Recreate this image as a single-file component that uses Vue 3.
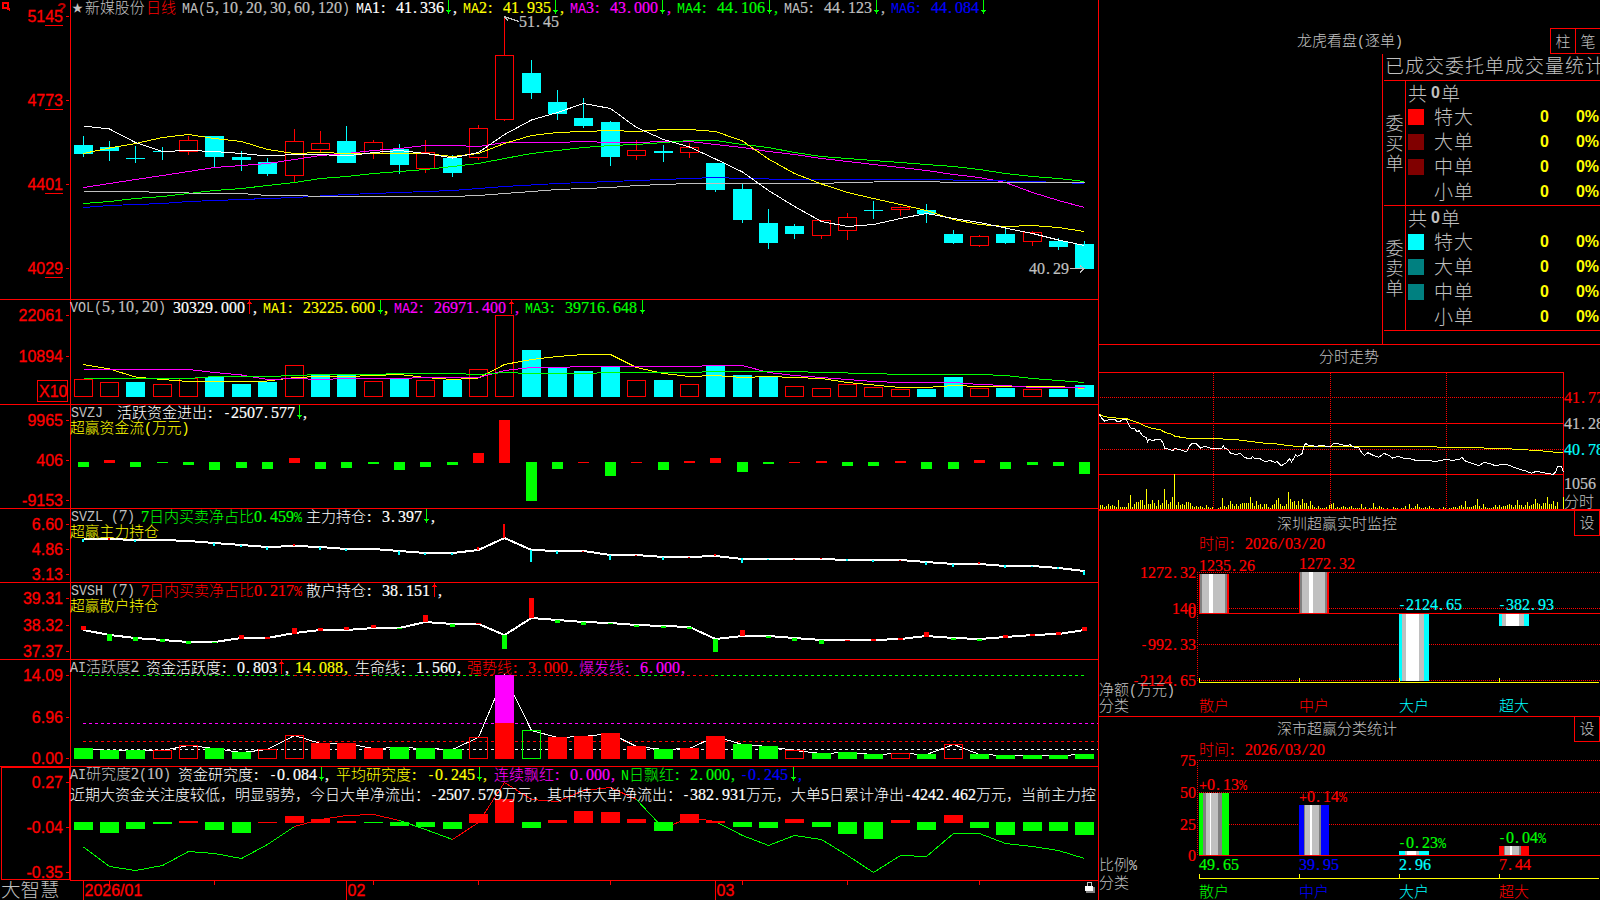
<template>
  <div class="terminal">
    <main class="charts">
      <svg
        v-for="p in panels"
        :key="p.id"
        class="panel"
        width="1099"
        :height="p.height"
        :viewBox="`0 ${p.top} 1099 ${p.height}`"
      >
        <template v-for="(s, i) in p.shapes" :key="i">
          <polyline v-if="s.points" class="line" :points="s.points" :stroke="s.color" :stroke-width="s.w || 1" :stroke-dasharray="s.dash" />
          <rect v-else-if="s.hollow" class="line" :x="s.x + 0.5" :y="s.y + 0.5" :width="s.w - 1" :height="Math.max(s.h - 1, 1)" :stroke="s.color" />
          <rect v-else class="fill" :x="s.x" :y="s.y" :width="s.w" :height="s.h" :fill="s.color" />
        </template>

        <rect class="fill" x="70" :y="p.top" width="1" :height="p.id === 'dates' ? 0 : p.height" :fill="RED" />
        <rect
          v-if="p.id !== 'dates'"
          class="fill"
          :x="p.id === 'research' ? 70 : 0"
          :y="p.top + p.height - 1"
          width="1099"
          height="1"
          :fill="RED"
        />
        <g v-for="t in p.ticks" :key="t[0]">
          <rect class="fill" x="66" :y="t[1]" width="3" height="1" :fill="RED" />
          <text class="axis" x="63" :y="t[1] + 6" text-anchor="end">{{ t[0] }}</text>
          <rect v-if="p.id === 'kline'" class="fill" x="45" :y="t[1] + 9" width="18" height="1" :fill="RED" />
        </g>

        <template v-if="p.id === 'kline'">
          <path class="line" d="M3 3h5v5h-5zM7 8l3 2" :stroke="RED" stroke-width="2" />
          <text class="help" x="57" y="13">?</text>
          <path class="line" d="M504 16.5L519 21.5M504 16.5l4 4" :stroke="GRAY" />
          <path class="line" d="M1070 268.5h14M1080 265.5l4 3l-4 4" :stroke="GRAY" />
        </template>
        <template v-if="p.id === 'vol'">
          <rect class="line" x="37.5" y="380.5" width="30" height="21" :stroke="RED" />
          <text class="axis" x="39" y="397">X10</text>
        </template>
        <rect v-if="p.id === 'research'" class="line" x="1.5" y="767.5" width="68" height="112" :stroke="RED" />
        <template v-if="p.id === 'dates'">
          <g v-for="m in months" :key="m[1]">
            <rect class="fill" :x="m[0]" y="881" width="1" height="19" :fill="RED" />
            <text class="axis" :x="m[0] + 1.5" y="896">{{ m[1] }}</text>
          </g>
          <rect v-for="x in weekTicks" :key="x" class="fill" :x="x" y="881" width="1" height="4" :fill="RED" />
          <path class="line" d="M1087.5 886v-3.500h4v3.500" :stroke="GRAY" />
          <rect class="fill" x="1086" y="887" width="9" height="6" fill="#808080" />
          <rect class="fill" x="1085" y="886" width="8" height="5" fill="#fff" />
        </template>

        <Txt v-for="(t, i) in p.texts" :key="'t' + i" :x="t[0]" :y="t[1]" :text="t[2]" :color="t[3]" :size="t[4]" />
        <Arrow v-for="(a, i) in p.arrows" :key="'a' + i" :x="a[0]" :y="a[1]" :up="a[2]" />
      </svg>
    </main>

    <aside class="side">
      <section class="orders">
        <header class="orders__bar">
          <svg class="orders__title" width="110" height="20"><Txt :x="0" :y="14" text="龙虎看盘(逐单)" :color="GRAY" /></svg>
          <div class="orders__tabs">
            <button type="button">柱</button>
            <button type="button">笔</button>
          </div>
        </header>
        <div class="orders__body">
          <div class="book">
            <h2 class="book__title">已成交委托单成交量统计</h2>
            <div v-for="g in book" :key="g.name" class="book__group">
              <div class="book__side"><span v-for="c in g.name" :key="c">{{ c }}</span></div>
              <div class="book__rows">
                <div class="book__total">共<b>0</b>单</div>
                <div v-for="r in g.rows" :key="r[0]" class="book__row">
                  <i class="book__swatch" :class="r[1]" />
                  <span class="book__name">{{ r[0] }}</span>
                  <b class="book__count">0</b>
                  <b class="book__pct">0%</b>
                </div>
              </div>
            </div>
          </div>
        </div>
      </section>

      <!-- intraday trend -->
      <svg class="panel" width="501" height="166" viewBox="1099 345 501 166">
        <rect class="fill" x="1099" y="372" width="465" height="1" :fill="RED" />
        <rect class="fill" x="1563" y="372" width="1" height="137" :fill="RED" />
        <rect class="fill" x="1099" y="423" width="465" height="1" :fill="RED" />
        <rect class="fill" x="1099" y="474" width="465" height="1" :fill="RED" />
        <path class="line dots" d="M1100 397.500H1563M1100 449.500H1563M1213.500 373V509M1330.500 373V509M1446.500 373V509" />
        <rect v-for="(v, i) in ticksVol" :key="i" class="fill" :x="minuteX(i)" :y="509 - v" width="1" :height="v" fill="#ff0" />
        <rect class="fill" x="1563" y="497" width="1" height="12" fill="#ff0" />
        <polyline class="line" :points="avgLine" stroke="#ff0" />
        <polyline class="line" :points="priceLine" stroke="#fff" />
        <rect class="fill" x="1099" y="509" width="501" height="2" :fill="RED" />
        <Txt v-for="(t, i) in trendTexts" :key="i" :x="t[0]" :y="t[1]" :text="t[2]" :color="t[3]" />
      </svg>

      <svg v-for="b in barCharts" :key="b.title" class="panel" width="501" :height="b.height" :viewBox="`1099 ${b.top} 501 ${b.height}`">
        <path class="line dots" :d="b.dots" />
        <rect class="fill" x="1199" :y="b.zero" width="401" height="1" :fill="RED" />
        <rect class="fill" x="1199" :y="b.base" width="400" height="1" fill="#ff0" />
        <g v-for="(bar, i) in b.bars" :key="i">
          <rect v-for="(s, k) in stripes(bar, 1199 + i * 100)" :key="k" class="fill" :x="s.x" :y="bar.y" :width="s.w" :height="bar.h" :fill="s.c" />
          <rect class="fill" :x="1199 + i * 100" :y="b.base - 4" width="1" height="4" fill="#ff0" />
          <Txt :x="bar.lx" :y="bar.ly" :text="bar.label" :color="bar.lc" />
          <Txt v-if="bar.value" :x="1199 + i * 100" :y="870" :text="bar.value" :color="bar.color" />
          <Txt :x="1199 + i * 100" :y="b.base + (b.zero === 613 ? 29 : 19)" :text="bar.name" :color="bar.color" />
        </g>
        <rect class="line" x="1574.5" :y="b.boxY + 0.5" width="25" height="25" :stroke="RED" />
        <rect v-if="b.zero === 613" class="fill" x="1099" y="716" width="501" height="1" :fill="RED" />
        <Txt v-for="(t, i) in b.texts" :key="'t' + i" :x="t[0]" :y="t[1]" :text="t[2]" :color="t[3]" />
      </svg>
    </aside>
  </div>
</template>

<script setup>
import { h } from 'vue'

const RED = '#f00'
const CYAN = '#0ff'
const GREEN = '#0f0'
const GRAY = '#c0c0c0'
const WHITE = '#fff'
const YELLOW = '#ff0'
const MAGENTA = '#f0f'
const BLUE = '#00f'

// fixed cells: 8px for latin, 15px for chinese
function Txt({ x, y, text, color, size }) {
  const cell = size || 15
  let left = x
  const runs = text.match(/[0-9.,:]+|[^0-9.,:\u0080-\uffff]+|[^\x20-\x7e]+/g) || []
  const nodes = runs.map((run) => {
    const code = run.charCodeAt(0)
    const start = left
    const step = code < 127 ? 8 : cell
    left += run.length * step
    if (/^[0-9.,:]/.test(run)) {
      const xs = [...run].map((c, i) => start + i * step + (/[.,:]/.test(c) ? 1 : 0)).join(' ')
      return h('text', { class: 'digits', x: xs, y, fill: color, stroke: color }, run)
    }
    return h(
      'text',
      {
        class: code < 127 ? 'latin' : 'han',
        x: start,
        y,
        fill: color,
        'font-size': code < 127 ? 15 : cell,
        textLength: run.length * step,
        lengthAdjust: 'spacingAndGlyphs',
      },
      run,
    )
  })
  return h('g', nodes)
}
Txt.props = ['x', 'y', 'text', 'color', 'size']

function Arrow({ x, y, up }) {
  const d = up
    ? `M${x + 0.5} ${y - 13}v14M${x - 2} ${y - 9.5}h5M${x - 1} ${y - 10.5}h3`
    : `M${x + 0.5} ${y - 13}v14M${x - 2} ${y - 2.5}h5M${x - 1} ${y - 1.5}h3`
  return h('path', { d, stroke: up ? RED : GREEN, 'shape-rendering': 'crispEdges', fill: 'none' })
}
Arrow.props = ['x', 'y', 'up']

const cx = (i) => Math.floor(83.15 + i * 26.36)

// pts: [index, y] pairs, or a plain list with one y per day
const line = (pts, color, w) => ({
  points: pts.map((p, i) => (Array.isArray(p) ? `${cx(p[0]) + 0.5},${p[1]}` : `${cx(i) + 0.5},${p}`)).join(' '),
  color,
  w,
})
const seg = (ys, from, to, color) => line(ys.slice(from, to + 1).map((y, i) => [from + i, y]), color)
const dashed = (x1, x2, y, color) => ({ points: `${x1},${y + 0.5} ${x2},${y + 0.5}`, color, dash: '3 3' })
const box = (i, y1, y2, color, half = 9, hollow = false) => ({
  x: cx(i) - half, y: y1, w: half * 2 + 1, h: y2 - y1, color, hollow,
})

// high, body top, body bottom, low, rising
const candles = [
  [136, 145, 154, 157], [141, 147, 151, 161], [146, 158, 159, 163], [147, 151, 152, 160], [136, 140, 152, 155, 1],
  [136, 136, 157, 167], [151, 157, 160, 171], [158, 162, 174, 176], [129, 141, 176, 182, 1], [131, 143, 150, 153, 1],
  [126, 141, 163, 163], [140, 142, 154, 159, 1], [144, 149, 165, 174], [140, 152, 169, 173, 1], [155, 158, 173, 177],
  [125, 128, 158, 160, 1], [17, 55, 120, 121, 1], [60, 73, 93, 99], [90, 102, 114, 120], [98, 118, 126, 128],
  [121, 122, 157, 166], [140, 150, 156, 160, 1], [145, 151, 153, 162], [143, 147, 153, 158, 1], [163, 163, 190, 192],
  [184, 189, 220, 223], [209, 223, 243, 249], [224, 226, 234, 239], [220, 220, 236, 239, 1], [213, 217, 231, 240, 1],
  [201, 210, 211, 219], [206, 207, 210, 216, 1], [204, 210, 214, 223], [230, 234, 243, 244], [235, 236, 246, 247, 1],
  [229, 234, 243, 244], [231, 232, 242, 246, 1], [238, 241, 247, 250], [241, 244, 269, 269],
]
const candleShapes = candles.flatMap(([hi, top, bottom, lo, up], i) => {
  const color = up ? RED : CYAN
  return [
    { x: cx(i), y: hi, w: 1, h: top - hi, color },
    { x: cx(i), y: bottom, w: 1, h: lo - bottom, color },
    box(i, top, bottom, color, 9, !!up),
  ]
})
const ma1 = [126, 129, 142.5, 151.5, 150.5, 151.5, 153.5, 156, 154.5, 154.5, 156, 152.5, 150.5, 153.5, 158, 152.5, 134.5, 120, 112.5, 103.5, 108.5, 127.5, 139.5, 147, 159, 172, 190.5, 206.5, 221.5, 226.5, 224.5, 218.5, 213.5, 218.5, 222.5, 228, 233.5, 240, 245.5]
const ma2 = [153.5, 148, 143.5, 137.5, 134.5, 138.5, 141.5, 149.5, 153.5, 152.5, 153.5, 153.5, 153.5, 153.5, 156.5, 153.5, 143.5, 135.5, 132.5, 131.5, 130.5, 131.5, 129.5, 129.5, 131.5, 141, 159, 173.5, 184, 192.5, 198.5, 204.5, 210.5, 219.5, 224.5, 226.5, 225.5, 227.5, 231.5]
const ma3 = [187.5, 183.5, 179.5, 175.5, 171.5, 167.5, 165.5, 163.5, 159.5, 155.5, 153.5, 150.5, 148.5, 145.5, 145.5, 146.5, 142.5, 142.5, 142.5, 141.5, 142.5, 142.5, 141.5, 141.5, 144.5, 147.5, 151.5, 154.5, 158.5, 161.5, 164.5, 167.5, 170.5, 174.5, 177.5, 182.5, 192.5, 200.5, 207.5]
const ma4 = [203.5, 201.5, 198.5, 196.5, 193.5, 190.5, 188.5, 185.5, 182.5, 178.5, 176.5, 173.5, 171.5, 169.5, 166.5, 163.5, 158.5, 153.5, 150.5, 147.5, 145.5, 144.5, 142.5, 140.5, 140.5, 144.5, 147.5, 152.5, 156.5, 158.5, 160.5, 162.5, 164.5, 166.5, 169.5, 173.5, 176.5, 178.5, 181.5]
const ma6 = [[0, 207.5], [1, 205.5], [3, 203.5], [4, 201.5], [6, 199.5], [8, 197.5], [10, 194.5], [12, 192.5], [14, 190.5], [16, 186.5], [18, 183.5], [20, 181.5], [22, 179.5], [24, 177.5], [25, 178.5], [27, 179.5], [32, 179.5], [34, 180.5], [36, 181.5], [38, 183.5]]
const ma5 = [[0, 191.5], [2, 191.5], [3, 192.5], [5, 193.5], [6, 193.5], [7, 195.5], [8, 195.5], [9, 196.5], [14, 196.5], [15, 195.5], [16, 193.5], [17, 191.5], [18, 189.5], [20, 187.5], [21, 185.5], [22, 184.5], [23, 183.5], [28, 183.5], [29, 182.5], [31, 181.5], [32, 181.5], [33, 182.5], [38, 182.5]]

// positive number is a hollow red bar top, negative a filled cyan one
const volumes = [379, 382, -382, 384, 378, -377, -384, -382, 365, -375, -375, 381, -379, 380, -380, 369, 315, -350, -368, -371, -367, 380, -380, 384, -366, -375, -377, 386, 388, 384, 387, 389, -389, -377, 388, -388, 389, -389, -385]
const volShapes = volumes.map((v, i) => box(i, Math.abs(v), 397, v > 0 ? RED : CYAN, 9, v > 0))
const vma1 = [364.5, 369, 377, 379.5, 381.5, 381.5, 381.5, 381, 377.5, 376.5, 376.5, 375.5, 374.5, 377.5, 379.5, 378, 364.5, 359.5, 356.5, 354.5, 354.5, 367.5, 373.5, 376.5, 375.5, 377.5, 376.5, 377.5, 378.5, 382.5, 385, 387.5, 387.5, 385.5, 386.5, 386.5, 386.5, 386.5, 388.5]
const vma2 = [[0, 369.5], [4, 369.5], [5, 372.5], [6, 375], [7, 379.5], [8, 378.5], [9, 379.5], [10, 378.5], [12, 378.5], [13, 377.5], [15, 377.5], [16, 370.5], [17, 367.5], [18, 367.5], [19, 366.5], [23, 366.5], [24, 365.5], [25, 365.5], [26, 372.5], [27, 375.5], [28, 377.5], [29, 379.5], [30, 381.5], [31, 382.5], [33, 382.5], [34, 384.5], [35, 385.5], [36, 387.5], [38, 387.5]]
const vma3 = [[0, 378.5], [4, 378.5], [5, 376.5], [7, 376.5], [8, 375.5], [9, 374.5], [11, 374.5], [12, 373.5], [14, 373.5], [15, 374.5], [16, 372.5], [17, 373.5], [19, 373.5], [20, 372.5], [23, 372.5], [24, 371.5], [27, 371.5], [28, 372.5], [30, 373.5], [31, 374.5], [34, 374.5], [35, 375.5], [36, 378.5], [37, 380.5], [38, 382.5]]

// bars around a zero row: above it red, below it green
const around = (ys, zero, half) =>
  ys.map((y, i) => (y <= zero && y > 0 ? box(i, y, zero + 1, RED, half) : box(i, zero, Math.abs(y), GREEN, half)))
const flow = [467, 460, 467, -463, 465, 470, 468, 469, 458, 469, 468, 464, 470, 467, 465, 453, 420, 501, 469, 462, 476, 462, 470, 461, 458, 472, 464, 462, 461, 466, 466, 461, 469, 469, 460, 469, 465, 466, 474]
const research = [830, 833, 829, 824, 821, 830, 833, 822, 816, 819, 821, 823, 826, 827, 829, 814, 799, 828, 820, 811, 812, 819, 831, 814, 821, 827, 828, 819, 827, 834, 839, 820, 830, 815, 828, 835, 831, 831, 835]
const researchLine = [847, 866.5, 870.5, 865.5, 851.5, 853.5, 858.5, 844.5, 826.5, 819.5, 815.5, 814.5, 820.5, 829.5, 839.5, 822.5, 782.5, 799.5, 801.5, 790.5, 787.5, 799.5, 828.5, 817.5, 821.5, 835.5, 845.5, 835.5, 839.5, 855.5, 872.5, 855.5, 856.5, 833.5, 833.5, 843.5, 846.5, 850.5, 858.5]

const mainHold = [539, 539, 540, 540, 541, 543, 545, 547, 546, 547, 549, 549, 551, 553, 553, 550, 538, 550, 551, 551, 555, 555, 557, 557, 556, 559, 559, 559, 559, 560, 560, 560, 562, 564, 564, 566, 566, 568, 571]
const mainSpikes = [
  [0, 539, 542], [1, 538, 540, 1], [2, 540, 542], [5, 543, 546], [6, 545, 547], [7, 547, 550], [8, 544, 546, 1], [9, 547, 550],
  [10, 549, 551], [12, 551, 555], [13, 553, 555], [14, 553, 555], [15, 547, 550, 1], [16, 524, 538, 1], [17, 550, 562],
  [18, 551, 554], [19, 551, 552, 1], [20, 555, 560], [21, 555, 556, 1], [22, 557, 560], [23, 557, 558, 1], [24, 554, 556, 1],
  [25, 558, 563], [26, 559, 560], [27, 559, 560, 1], [28, 558, 559, 1], [29, 559, 561], [30, 560, 562], [31, 560, 561, 1],
  [32, 562, 565], [33, 564, 567], [34, 562, 564, 1], [35, 565, 568], [36, 566, 567], [37, 567, 569], [38, 571, 575],
]
const retailHold = [630, 635, 638, 640, 642, 642, 638, 638, 633, 630, 630, 628, 628, 622, 624, 624, 635, 618, 620, 622, 623, 625, 626, 627, 639, 636, 636, 638, 640, 640, 640, 639, 636, 638, 639, 637, 635, 634, 630]
const retailBars = [
  [626, 630, 1], [634, 641], [637, 641], [639, 642], [641, 644], [642, 643], [635, 639, 1], [637, 639, 1], [628, 634, 1],
  [628, 631, 1], [627, 630, 1], [625, 628, 1], [628, 629], [615, 622, 1], [624, 627], [623, 624, 1], [635, 649], [598, 618, 1],
  [620, 623], [622, 625], [623, 624], [625, 627], [626, 628], [627, 629], [639, 652], [630, 636, 1], [636, 638], [638, 641],
  [640, 644], [640, 641, 1], [639, 641, 1], [638, 640, 1], [632, 637, 1], [638, 640], [639, 641], [635, 638, 1], [634, 636, 1],
  [632, 635, 1], [627, 631, 1],
]

// g filled green, r filled red, h hollow red, k hollow green
const active = '748g 750g 750g 750h 745h 748g 752g 749h 735h 743r 743r 748r 747g 748g 749g 737h 675m 730k 737r 736r 733r 746r 749g 748r 736r 744g 746g 750h 753g 752g 754g 753h 754g 744h 754g 755g 755g 755g 754g'
  .split(' ')
  .map((s) => [parseInt(s), s.slice(-1)])
const activeShapes = active.flatMap(([y, k], i) => {
  if (k === 'm') return [box(i, 675, 723, MAGENTA), box(i, 723, 759, RED)]
  return [box(i, y, 759, k === 'g' || k === 'k' ? GREEN : RED, 9, k === 'h' || k === 'k')]
})
const topDashes = [[83, 294, GREEN], [294, 373, RED], [373, 478, GREEN], [478, 636, RED], [636, 663, GREEN], [663, 715, RED], [715, 1084, GREEN]]

const panels = [
  {
    id: 'kline', top: 0, height: 300,
    ticks: [['5145', 16], ['4773', 100], ['4401', 184], ['4029', 268]],
    shapes: [...candleShapes, line(ma3, MAGENTA), line(ma4, GREEN), line(ma6, BLUE), line(ma5, GRAY), line(ma2, YELLOW), line(ma1, WHITE)],
    texts: [
      [72, 12, '★', GRAY, 11], [85, 13, '新媒股份', GRAY, 14.9], [146, 13, '日线', RED], [182, 13, 'MA(5,10,20,30,60,120)', GRAY],
      [356, 13, 'MA1: 41.336', WHITE], [452, 13, ',', WHITE], [463, 13, 'MA2: 41.935', YELLOW], [559, 13, ',', YELLOW],
      [570, 13, 'MA3: 43.000', MAGENTA], [666, 13, ',', MAGENTA], [677, 13, 'MA4: 44.106', GREEN], [773, 13, ',', GREEN],
      [784, 13, 'MA5: 44.123', GRAY], [880, 13, ',', GRAY], [891, 13, 'MA6: 44.084', BLUE],
      [519, 27, '51.45', GRAY], [1029, 274, '40.29', GRAY],
    ],
    arrows: [[448, 13], [555, 13], [662, 13], [769, 13], [876, 13], [983, 13]],
  },
  {
    id: 'vol', top: 300, height: 105,
    ticks: [['22061', 315], ['10894', 356]],
    shapes: [...volShapes, line(vma1, YELLOW), line(vma2, MAGENTA), line(vma3, GREEN)],
    texts: [
      [70, 312, 'VOL(5,10,20)', GRAY], [173, 313, '30329.000', WHITE], [252, 313, ',', WHITE], [263, 313, 'MA1: 23225.600', YELLOW],
      [383, 313, ',', YELLOW], [394, 313, 'MA2: 26971.400', MAGENTA], [514, 313, ',', MAGENTA], [525, 313, 'MA3: 39716.648', GREEN],
    ],
    arrows: [[249, 313, 1], [380, 313], [511, 313, 1], [642, 313]],
  },
  {
    id: 'flow', top: 405, height: 104,
    ticks: [['9965', 420], ['406', 460], ['-9153', 500]],
    shapes: around(flow, 462, 5),
    texts: [
      [71, 417, 'SVZJ', GRAY], [117, 418, '活跃资金进出: -2507.577', WHITE], [302, 418, ',', WHITE], [70, 433, '超赢资金流(万元)', YELLOW, 14.8],
    ],
    arrows: [[299, 418]],
  },
  {
    id: 'main', top: 509, height: 74,
    ticks: [['6.60', 524], ['4.86', 549], ['3.13', 574]],
    shapes: [line(mainHold, WHITE, 2), ...mainSpikes.map(([i, a, b, up]) => ({ x: cx(i) - 1, y: a, w: 2, h: b - a, color: up ? RED : CYAN }))],
    texts: [
      [71, 521, 'SVZL (7)', GRAY], [141, 522, '7日内买卖净占比0.459%', GREEN], [306, 522, '主力持仓: 3.397', WHITE], [430, 522, ',', WHITE],
      [70, 537, '超赢主力持仓', YELLOW, 14.8],
    ],
    arrows: [[426, 522]],
  },
  {
    id: 'retail', top: 583, height: 77,
    ticks: [['39.31', 598], ['38.32', 625], ['37.37', 651]],
    shapes: [line(retailHold, WHITE, 2), ...retailBars.map(([a, b, up], i) => box(i, a, b, up ? RED : GREEN, 2))],
    texts: [
      [71, 595, 'SVSH (7)', GRAY], [141, 596, '7日内买卖净占比0.217%', RED], [306, 596, '散户持仓: 38.151', WHITE], [437, 596, ',', WHITE],
      [70, 611, '超赢散户持仓', YELLOW, 14.8],
    ],
    arrows: [[434, 596, 1]],
  },
  {
    id: 'active', top: 660, height: 107,
    ticks: [['14.09', 675], ['6.96', 717], ['0.00', 758]],
    shapes: [
      ...topDashes.map(([a, b, c]) => dashed(a, b, 675, c)),
      dashed(83, 1098, 723, MAGENTA), dashed(83, 1098, 741, RED), dashed(83, 1098, 749, WHITE),
      line(active.map((a) => a[0] + 0.5), WHITE), ...activeShapes,
    ],
    texts: [
      [70, 672, 'AI活跃度2', GRAY], [146, 673, '资金活跃度: 0.803', WHITE], [284, 673, ',', WHITE], [295, 673, '14.088,', YELLOW],
      [355, 673, '生命线: 1.560,', WHITE], [467, 673, '强势线: 3.000,', RED], [579, 673, '爆发线: 6.000,', MAGENTA],
    ],
    arrows: [[281, 673, 1]],
  },
  {
    id: 'research', top: 767, height: 114,
    ticks: [['0.27', 782], ['-0.04', 827], ['-0.35', 872]],
    shapes: [
      seg(researchLine, 0, 8, GREEN), seg(researchLine, 8, 12, RED), seg(researchLine, 12, 14, GREEN), seg(researchLine, 14, 21, RED),
      seg(researchLine, 21, 22, GREEN), seg(researchLine, 22, 24, RED), seg(researchLine, 24, 38, GREEN),
      ...around(research, 822, 9),
    ],
    texts: [
      [70, 779, 'AI研究度2(10)', GRAY], [178, 780, '资金研究度: -0.084', WHITE], [324, 780, ',', WHITE], [336, 780, '平均研究度: -0.245', YELLOW],
      [482, 780, ',', YELLOW], [494, 780, '连续飘红: 0.000,', MAGENTA], [621, 780, 'N日飘红: 2.000,', GREEN], [740, 780, '-0.245', BLUE], [797, 780, ',', BLUE],
      [70, 800, '近期大资金关注度较低，明显弱势，今日大单净流出：-2507.579万元，其中特大单净流出：-382.931万元，大单5日累计净出-4242.462万元，当前主力控', WHITE],
    ],
    arrows: [[321, 780], [479, 780], [793, 780]],
  },
  { id: 'dates', top: 881, height: 19, ticks: [], shapes: [], texts: [[1, 897, '大智慧', GRAY, 19.5]], arrows: [] },
]
const months = [[83, '2026/01'], [346, '02'], [715, '03']]
const weekTicks = [109, 214, 373, 478, 610, 742, 847, 979]

const book = [
  { name: '委买单', rows: [['特大', 'red'], ['大单', 'maroon'], ['中单', 'maroon'], ['小单', 'none']] },
  { name: '委卖单', rows: [['特大', 'cyan'], ['大单', 'teal'], ['中单', 'teal'], ['小单', 'none']] },
]

// intraday lines, in thirds of a pixel from 1090,340
const third = (s) =>
  s.split(' ').map((p) => p.split(',').map(Number)).map(([x, y]) => `${1090 + x / 3},${340 + y / 3}`).join(' ')
const avgLine = third('28,223 40,229 55,232 78,234 110,236 125,242 145,248 160,256 185,265 210,269 225,277 245,283 255,289 275,292 295,295 365,296 430,298 470,303 520,309 560,312 590,316 620,319 985,320 1145,323 1250,326 1315,330 1360,333 1400,337 1420,338')
const priceLine = third('28,223 36,236 44,243 58,239 74,238 80,243 92,243 100,238 110,240 117,256 123,264 134,266 141,275 148,272 156,286 168,292 173,306 178,297 188,303 197,298 212,299 219,308 224,325 240,328 248,333 254,325 278,331 290,336 298,319 307,310 318,311 332,324 345,319 360,324 380,327 395,325 400,317 404,325 410,325 422,340 440,344 450,340 465,353 482,357 488,349 493,355 508,355 526,366 540,361 556,368 561,364 574,377 588,369 598,356 605,366 617,344 622,349 636,341 642,317 648,311 658,318 670,317 677,320 690,316 705,318 720,320 730,312 742,310 752,314 770,317 780,314 795,323 806,323 815,338 824,346 834,338 845,344 866,352 882,340 898,347 908,354 925,349 940,354 970,358 978,363 1000,361 1040,364 1068,358 1085,361 1108,359 1116,352 1124,362 1145,370 1168,377 1182,367 1200,371 1218,378 1235,373 1255,375 1280,385 1290,388 1310,394 1325,400 1338,394 1365,399 1390,403 1397,395 1402,380 1414,380 1420,395')
const ticksVol = [
  4, 4, 2, 3, 5, 3, 4, 3, 2, 9, 2, 2, 2, 2, 6, 14, 2, 5, 7, 7, 9, 9, 4, 20, 5, 5, 9, 6, 3, 9, 4, 6, 20, 9, 5, 7, 12, 35, 4, 7, 4, 5, 4, 7, 7, 6, 3, 2, 3, 2, 3,
  2, 1, 4, 2, 1, 2, 0, 0, 1, 2, 11, 3, 2, 4, 8, 5, 3, 5, 3, 5, 6, 6, 6, 6, 12, 6, 3, 8, 4, 5, 2, 5, 5, 2, 1, 4, 5, 9, 11, 5, 3, 3, 5, 17, 10, 7, 8, 4, 8, 4,
  10, 6, 6, 3, 8, 4, 2, 1, 3, 1, 1, 1, 2, 4, 5, 6, 1, 2, 1, 2, 3, 2, 1, 2, 3, 1, 1, 1, 1, 5, 1, 2, 0, 1, 1, 6, 2, 1, 3, 2, 1, 0, 1, 0, 0, 2, 1, 1, 0, 1,
  1, 3, 0, 5, 1, 1, 3, 5, 2, 1, 1, 2, 1, 3, 1, 1, 0, 0, 1, 0, 2, 1, 0, 1, 1, 2, 2, 1, 3, 4, 2, 8, 2, 2, 2, 3, 4, 10, 3, 1, 5, 2, 1, 1, 1, 2, 4, 2, 4, 2,
  3, 3, 4, 5, 4, 2, 4, 9, 4, 4, 2, 4, 7, 3, 4, 5, 10, 6, 5, 3, 6, 6, 12, 5, 5, 8, 3, 7,
]
// the last minute drawn sits at 1557
const minuteX = (i) => 1100 + Math.round((i * 457) / (ticksVol.length - 1))
const trendTexts = [
  [1319, 362, '分时走势', GRAY], [1564, 403, '41.77', RED], [1564, 429, '41.28', GRAY], [1564, 455, '40.78', CYAN],
  [1564, 489, '1056', GRAY], [1564, 507, '分时', GRAY],
]

const shade = { g: '#808080', l: '#c0c0c0', w: '#fff' }
function stripes(bar, x0) {
  let x = x0
  return bar.pattern.map(([k, w]) => {
    const s = { x, w, c: shade[k] || bar.color }
    x += w
    return s
  })
}
const steel = [['c', 1], ['g', 2], ['l', 7], ['w', 4], ['l', 12], ['g', 2], ['c', 2]]
const glass = [['c', 3], ['l', 4], ['w', 13], ['l', 5], ['c', 5]]
const slim = [['c', 5], ['g', 1], ['l', 5], ['w', 2], ['l', 7], ['g', 2], ['c', 8]]
const barCharts = [
  {
    title: 'monitor', top: 511, height: 206, zero: 613, base: 682, boxY: 510,
    dots: 'M1199 572.500H1600M1199 608.500H1600M1199 644.500H1600M1199 680.500H1600M1197.500 572V681',
    bars: [
      { name: '散户', color: RED, y: 574, h: 39, pattern: steel, label: '1235.26', lx: 1199, ly: 571, lc: RED },
      { name: '中户', color: RED, y: 572, h: 41, pattern: steel, label: '1272.32', lx: 1299, ly: 569, lc: RED },
      { name: '大户', color: CYAN, y: 614, h: 67, pattern: glass, label: '-2124.65', lx: 1398, ly: 610, lc: CYAN },
      { name: '超大', color: CYAN, y: 614, h: 12, pattern: glass, label: '-382.93', lx: 1498, ly: 610, lc: CYAN },
    ],
    texts: [
      [1277, 529, '深圳超赢实时监控', GRAY, 14.9], [1579.5, 528, '设', GRAY], [1199, 549, '时间: 2026/03/20', RED],
      [1140, 578, '1272.32', RED], [1172, 614, '140', RED], [1188, 618, '0', RED], [1140, 650, '-992.33', RED], [1132, 686, '-2124.65', RED],
      [1099, 695, '净额(万元)', GRAY], [1099, 711, '分类', GRAY],
    ],
  },
  {
    title: 'stats', top: 717, height: 183, zero: 855, base: 878, boxY: 716,
    dots: 'M1199 760.500H1600M1199 792.500H1600M1199 824.500H1600M1197.500 760V856',
    bars: [
      { name: '散户', color: GREEN, y: 793, h: 62, pattern: [['c', 4], ['g', 3], ['l', 4], ['w', 1], ['l', 7], ['g', 4], ['c', 7]], label: '+0.13%', lx: 1199, ly: 790, lc: RED, value: '49.65' },
      { name: '中户', color: BLUE, y: 805, h: 50, pattern: slim, label: '+0.14%', lx: 1299, ly: 802, lc: RED, value: '39.95' },
      { name: '大户', color: CYAN, y: 851, h: 4, pattern: [['c', 6], ['l', 2], ['w', 9], ['l', 3], ['c', 10]], label: '-0.23%', lx: 1398, ly: 848, lc: GREEN, value: '2.96' },
      { name: '超大', color: RED, y: 846, h: 9, pattern: slim, label: '-0.04%', lx: 1498, ly: 843, lc: GREEN, value: '7.44' },
    ],
    texts: [
      [1277, 734, '深市超赢分类统计', GRAY], [1579.5, 734, '设', GRAY], [1199, 755, '时间: 2026/03/20', RED],
      [1180, 766, '75', RED], [1180, 798, '50', RED], [1180, 830, '25', RED], [1188, 861, '0', RED],
      [1099, 870, '比例%', GRAY], [1099, 888, '分类', GRAY],
    ],
  },
]
</script>

<style>
body { background: #000; }
.latin, .han, .digits { white-space: pre; }
.latin { font-family: "Liberation Mono", monospace; }
.digits {
  font-family: "Liberation Serif", serif;
  font-size: 16px;
  stroke-width: 0.2px;
}
.han { font-family: "Noto Sans CJK SC", sans-serif; font-weight: 300; }
</style>

<style scoped>
.terminal {
  display: flex;
  width: 1600px;
  height: 900px;
  overflow: hidden;
  background: #000;
  color: #c0c0c0;
  font-family: "Noto Sans CJK SC", sans-serif;
  font-weight: 300;
}
.charts {
  display: flex;
  flex-direction: column;
  width: 1098px;
  border-right: 1px solid #f00;
  overflow: hidden;
}
.side {
  display: flex;
  flex-direction: column;
  width: 501px;
}
.panel {
  display: block;
  flex: none;
  overflow: hidden;
}
.fill, .line { shape-rendering: crispEdges; }
.line { fill: none; }
.dots { stroke: #f00; stroke-dasharray: 1 1; }
.axis {
  font: 16px "Liberation Sans", sans-serif;
  fill: #f00;
  stroke: #f00;
  stroke-width: 0.3px;
}
.help {
  font: bold 15px "Liberation Sans", sans-serif;
  fill: #c00000;
}
.orders {
  display: flex;
  flex-direction: column;
  height: 344px;
  flex: none;
  border-bottom: 1px solid #f00;
}
.orders__bar {
  display: flex;
  justify-content: flex-end;
  height: 54px;
}
.orders__title { margin: 32px 143px 0 0; }
.orders__tabs {
  display: flex;
  height: 26px;
  margin-top: 28px;
  box-sizing: border-box;
  border: 1px solid #f00;
  border-right: 0;
}
.orders__tabs button {
  width: 24px;
  padding: 0;
  border: 0;
  background: none;
  color: inherit;
  font: inherit;
  font-size: 15px;
  line-height: 22px;
}
.orders__tabs button + button {
  width: 25px;
  border-left: 1px solid #f00;
}
.orders__body {
  flex: 1;
  display: flex;
  justify-content: flex-end;
}
.book {
  width: 217px;
  border-left: 1px solid #f00;
  overflow: hidden;
}
.book__title {
  margin: 0;
  height: 26px;
  padding-left: 2px;
  font-size: 19px;
  font-weight: 300;
  letter-spacing: 1px;
  line-height: 22px;
  white-space: nowrap;
}
.book__group {
  display: flex;
  height: 124px;
  margin-left: 1px;
  border-top: 1px solid #f00;
}
.book__group:last-child { border-bottom: 1px solid #f00; }
.book__side {
  display: flex;
  flex-direction: column;
  width: 21px;
  padding-top: 31px;
  box-sizing: border-box;
  font-size: 18px;
  line-height: 20px;
  text-align: center;
}
.book__rows {
  flex: 1;
  border-left: 1px solid #f00;
}
.book__total, .book__row {
  display: flex;
  align-items: center;
  height: 25px;
  font-size: 19px;
  line-height: 25px;
}
.book__total { padding-left: 2px; height: 23px; line-height: 21px; }
.book__total b {
  margin: 0 1px 0 4px;
  font: bold 16px "Liberation Sans", sans-serif;
}
.book__swatch {
  width: 16px;
  height: 16px;
  margin: 0 10px 0 2px;
}
.red { background: #f00; }
.maroon { background: #800000; }
.cyan { background: #0ff; }
.teal { background: #008080; }
.book__name {
  width: 61px;
  letter-spacing: 1px;
  line-height: 23px;
  padding-bottom: 2px;
}
.book__count, .book__pct {
  color: #ff0;
  font: bold 16px "Liberation Sans", sans-serif;
}
.book__count {
  width: 54px;
  text-align: right;
}
.book__pct {
  width: 50px;
  text-align: right;
}
</style>
